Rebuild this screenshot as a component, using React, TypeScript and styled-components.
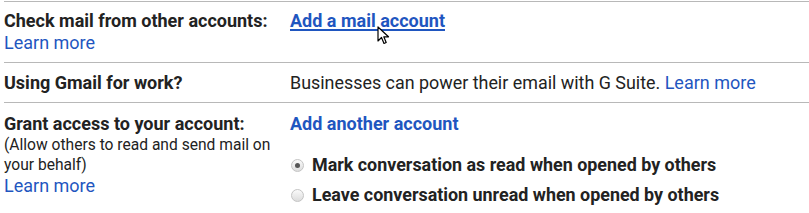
import React from "react";
import styled, { createGlobalStyle } from "styled-components";

const Global = createGlobalStyle`
  html, body { margin: 0; padding: 0; background: #fff; }
  body { font-family: Roboto, "Open Sans", Arial, sans-serif; color: #222; }
`;

const Page = styled.div`
  padding: 1px 0 0 4px;
  width: 805px;
`;

const Row = styled.div<{ $pt: number; $pb: number }>`
  display: grid;
  grid-template-columns: 286px 1fr;
  border-top: 1px solid #b8b8b8;
  padding: ${(p) => p.$pt}px 0 ${(p) => p.$pb}px 0;
`;

const Label = styled.div`
  display: flex;
  flex-direction: column;
`;

const Title = styled.div`
  font-size: 18px;
  font-weight: 700;
  line-height: 22px;
  color: #222;
`;

const Hint = styled.div`
  font-size: 15.6px;
  line-height: 20px;
  color: #222;
`;

const Link = styled.a<{ $underline?: boolean; $bold?: boolean }>`
  font-size: 18px;
  line-height: 22px;
  color: #1f56c0;
  font-weight: ${(p) => (p.$bold ? 700 : 400)};
  text-decoration: ${(p) => (p.$underline ? "underline" : "none")};
  text-decoration-thickness: 1.5px;
  text-underline-offset: 2px;
  cursor: pointer;
`;

const Content = styled.div`
  display: flex;
  flex-direction: column;
  position: relative;
`;

const Text = styled.div`
  font-size: 17.9px;
  line-height: 22px;
  color: #222;
`;

const Radios = styled.div`
  display: flex;
  flex-direction: column;
  gap: 8px;
  margin-top: 19px;
`;

const RadioRow = styled.label`
  display: flex;
  align-items: center;
  gap: 8px;
  font-size: 17.9px;
  font-weight: 700;
  line-height: 22px;
  color: #222;
`;

const RadioCircle = styled.span<{ $checked?: boolean }>`
  width: 11px;
  height: 11px;
  border-radius: 50%;
  border: 1px solid #c4c4c4;
  background: linear-gradient(#fafafa, #dcdcdc);
  margin-left: 1px;
  display: flex;
  align-items: center;
  justify-content: center;
  &::after {
    content: "";
    width: 5px;
    height: 5px;
    border-radius: 50%;
    background: ${(p) => (p.$checked ? "#555" : "transparent")};
  }
`;

const Cursor = styled.svg`
  position: absolute;
  left: 87px;
  top: 16px;
`;

export default function App() {
  return (
    <>
      <Global />
      <Page>
        <Row $pt={8} $pb={8}>
          <Label>
            <Title>Check mail from other accounts:</Title>
            <Link>Learn more</Link>
          </Label>
          <Content>
            <Link $underline $bold>Add a mail account</Link>
            <Cursor width="14" height="20" viewBox="0 0 14 20">
              <path
                d="M1 1 L1 15 L4.5 11.5 L7 17.5 L9.2 16.5 L6.8 10.8 L11.5 10.8 Z"
                fill="#fff"
                stroke="#000"
                strokeWidth="1.2"
                strokeLinejoin="round"
              />
            </Cursor>
          </Content>
        </Row>
        <Row $pt={9} $pb={8}>
          <Label>
            <Title>Using Gmail for work?</Title>
          </Label>
          <Content>
            <Text>
              Businesses can power their email with G Suite. <Link>Learn more</Link>
            </Text>
          </Content>
        </Row>
        <Row $pt={10} $pb={14}>
          <Label>
            <Title>Grant access to your account:</Title>
            <Hint>(Allow others to read and send mail on your behalf)</Hint>
            <Link>Learn more</Link>
          </Label>
          <Content>
            <Link $bold>Add another account</Link>
            <Radios>
              <RadioRow>
                <RadioCircle $checked />
                Mark conversation as read when opened by others
              </RadioRow>
              <RadioRow>
                <RadioCircle />
                Leave conversation unread when opened by others
              </RadioRow>
            </Radios>
          </Content>
        </Row>
      </Page>
    </>
  );
}
